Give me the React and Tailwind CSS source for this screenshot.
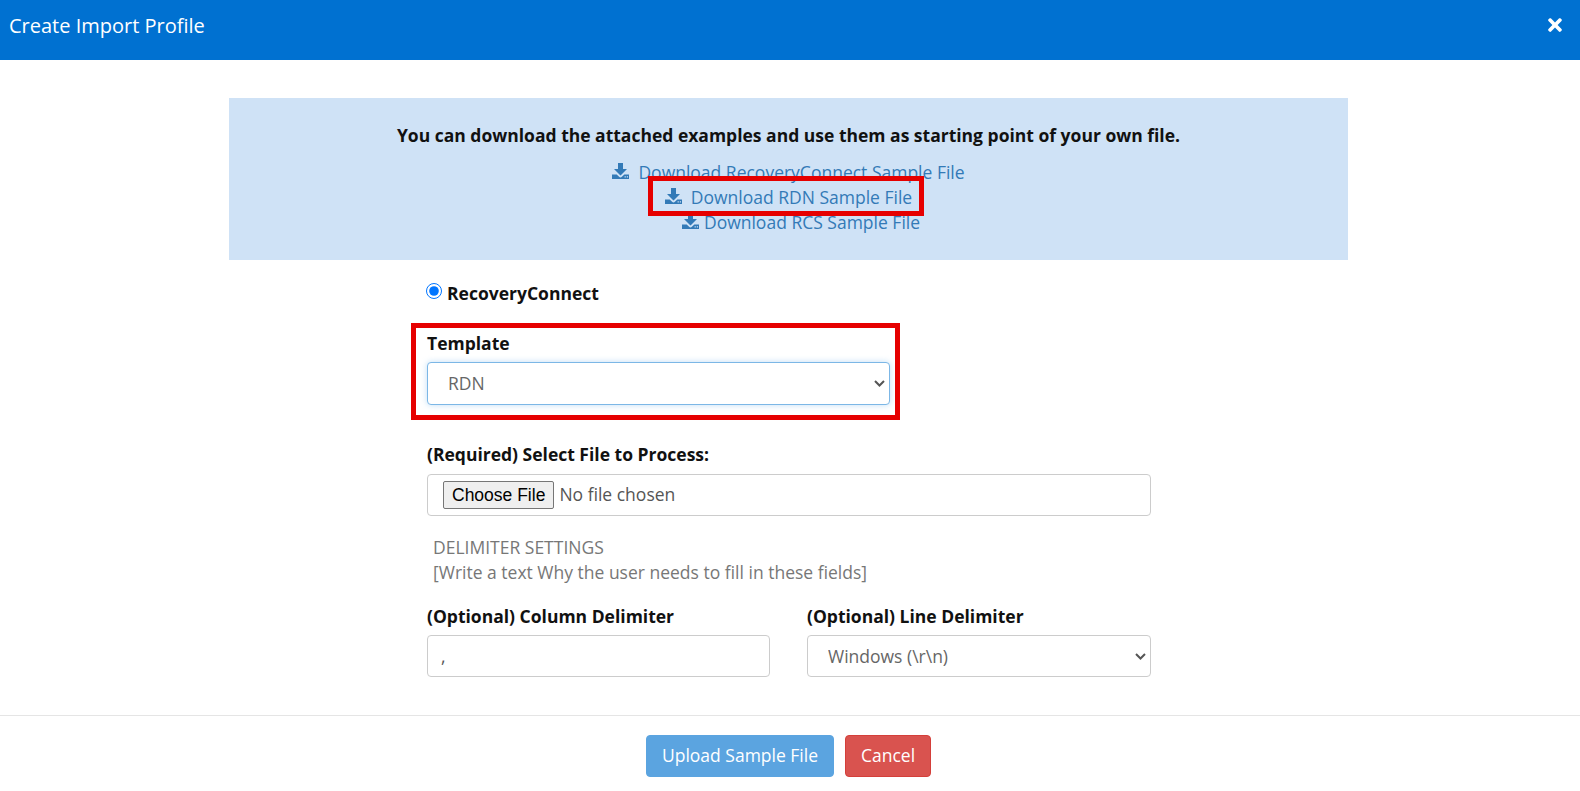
import React from 'react';
import { FaTimes } from 'react-icons/fa';

const DownloadIcon = () => (
  <svg viewBox="0 0 17 16" className="w-[17px] h-[16px] -mt-[3px] shrink-0" fill="currentColor" fillRule="evenodd">
    <path d="M6 0h5v6h4l-6.5 6.5L2 6h4z" />
    <path d="M0 11.5h4.7l2.4 2.3c.8.8 2 .8 2.8 0l2.4-2.3H17V16H0zM12.6 13.2v1.2h1.2v-1.2zM14.8 13.2v1.2H16v-1.2z" />
  </svg>
);

const DownloadLink = ({ label, className }) => (
  <a className={`flex items-center justify-center h-[25px] text-[#337ab7] ${className}`}>
    <DownloadIcon />
    <span>{label}</span>
  </a>
);

const FieldLabel = ({ children }) => (
  <label className="block font-bold text-[17.5px] leading-[24px] text-[#111111]">{children}</label>
);

const Select = ({ value, className, wrapClassName }) => (
  <div className={`relative flex items-center ${wrapClassName}`}>
    <select className={`block w-full appearance-none pl-[20px] pr-[20px] rounded-[4px] bg-white text-[#666666] border ${className}`}>
      <option>{value}</option>
    </select>
    <svg viewBox="0 0 11 7" className="absolute right-[5px] w-[11px] h-[7px] pointer-events-none" fill="none" stroke="#555555" strokeWidth="2">
      <path d="M1 1l4.5 4.5L10 1" />
    </svg>
  </div>
);

const App = () => {
  return (
    <div className="relative w-[1580px] h-[791px] bg-white overflow-hidden font-['Open_Sans',sans-serif] text-[17.5px] text-[#111111]">
      <header className="flex items-start justify-between h-[60px] bg-[#0071d1] text-white pl-[9px] pr-[15px] pt-[12px]">
        <h1 className="text-[20px] leading-[28px]">Create Import Profile</h1>
        <FaTimes className="w-[20px] h-[20px] mt-[3px]" />
      </header>

      <section className="ml-[229px] mt-[38px] w-[1119px] h-[162px] bg-[#cfe2f6] pt-[24px] text-center">
        <p className="font-bold leading-[26px] mb-[12px]">
          You can download the attached examples and use them as starting point of your own file.
        </p>
        <div className="leading-[25px]">
          <DownloadLink label="Download RecoveryConnect Sample File" className="gap-[9px]" />
          <DownloadLink label="Download RDN Sample File" className="gap-[9px]" />
          <DownloadLink label="Download RCS Sample File" className="gap-[5px] pl-[25px]" />
        </div>
      </section>

      <form className="ml-[427px] w-[724px]">
        <div className="flex items-center gap-[5px] mt-[21px] h-[24px]">
          <input type="radio" defaultChecked className="w-[16px] h-[16px] m-0 -ml-px mb-[4px] accent-[#0075ff]" />
          <span className="font-bold">RecoveryConnect</span>
        </div>

        <div className="w-[464px] mt-[26px]">
          <FieldLabel>Template</FieldLabel>
          <Select
            value="RDN"
            wrapClassName="mt-[7px] w-[463px]"
            className="h-[43px] pb-[1px] border-[#7cb7e6] shadow-[0_0_6px_rgba(102,175,233,0.4)]"
          />
        </div>

        <div className="mt-[37px]">
          <FieldLabel>(Required) Select File to Process:</FieldLabel>
          <input
            type="file"
            className="block mt-[8px] w-full h-[42px] pl-[15px] pt-[6px] border border-[#cccccc] rounded-[4px] text-[#555555] file:h-[28px] file:px-[8px] file:mr-[5px] file:border file:border-[#767676] file:rounded-[2px] file:bg-[#efefef] file:text-[#000000] file:text-[17.5px] file:font-['Liberation_Sans',sans-serif]"
          />
        </div>

        <div className="mt-[19px] pl-[6px] leading-[25px] text-[#777777]">
          <div>DELIMITER SETTINGS</div>
          <div>[Write a text Why the user needs to fill in these fields]</div>
        </div>

        <div className="grid grid-cols-[343px_344px] gap-[37px] mt-[19px]">
          <div>
            <FieldLabel>(Optional) Column Delimiter</FieldLabel>
            <input
              type="text"
              defaultValue=","
              className="block mt-[7px] w-full h-[42px] px-[13px] border border-[#cccccc] rounded-[4px] text-[#555555]"
            />
          </div>
          <div>
            <FieldLabel>(Optional) Line Delimiter</FieldLabel>
            <Select value="Windows (\r\n)" wrapClassName="mt-[7px]" className="h-[42px] border-[#cccccc]" />
          </div>
        </div>
      </form>

      <footer className="flex justify-center gap-[11px] mt-[38px] pt-[19px] border-t border-[#e5e5e5] pr-[3px]">
        <button className="h-[42px] w-[188px] pb-[2px] rounded-[4px] border border-[#5ba4e0] bg-[#5ba4e0] text-white">
          Upload Sample File
        </button>
        <button className="h-[42px] w-[86px] pb-[2px] rounded-[4px] border border-[#d43f3a] bg-[#d9534f] text-white">
          Cancel
        </button>
      </footer>

      {/* red annotation boxes drawn on top of the screenshot */}
      <div className="absolute left-[648px] top-[176px] w-[276px] h-[40px] border-[5px] border-[#e60000]" />
      <div className="absolute left-[411px] top-[323px] w-[489px] h-[97px] border-[5px] border-[#e60000]" />
    </div>
  );
};

export default App;
